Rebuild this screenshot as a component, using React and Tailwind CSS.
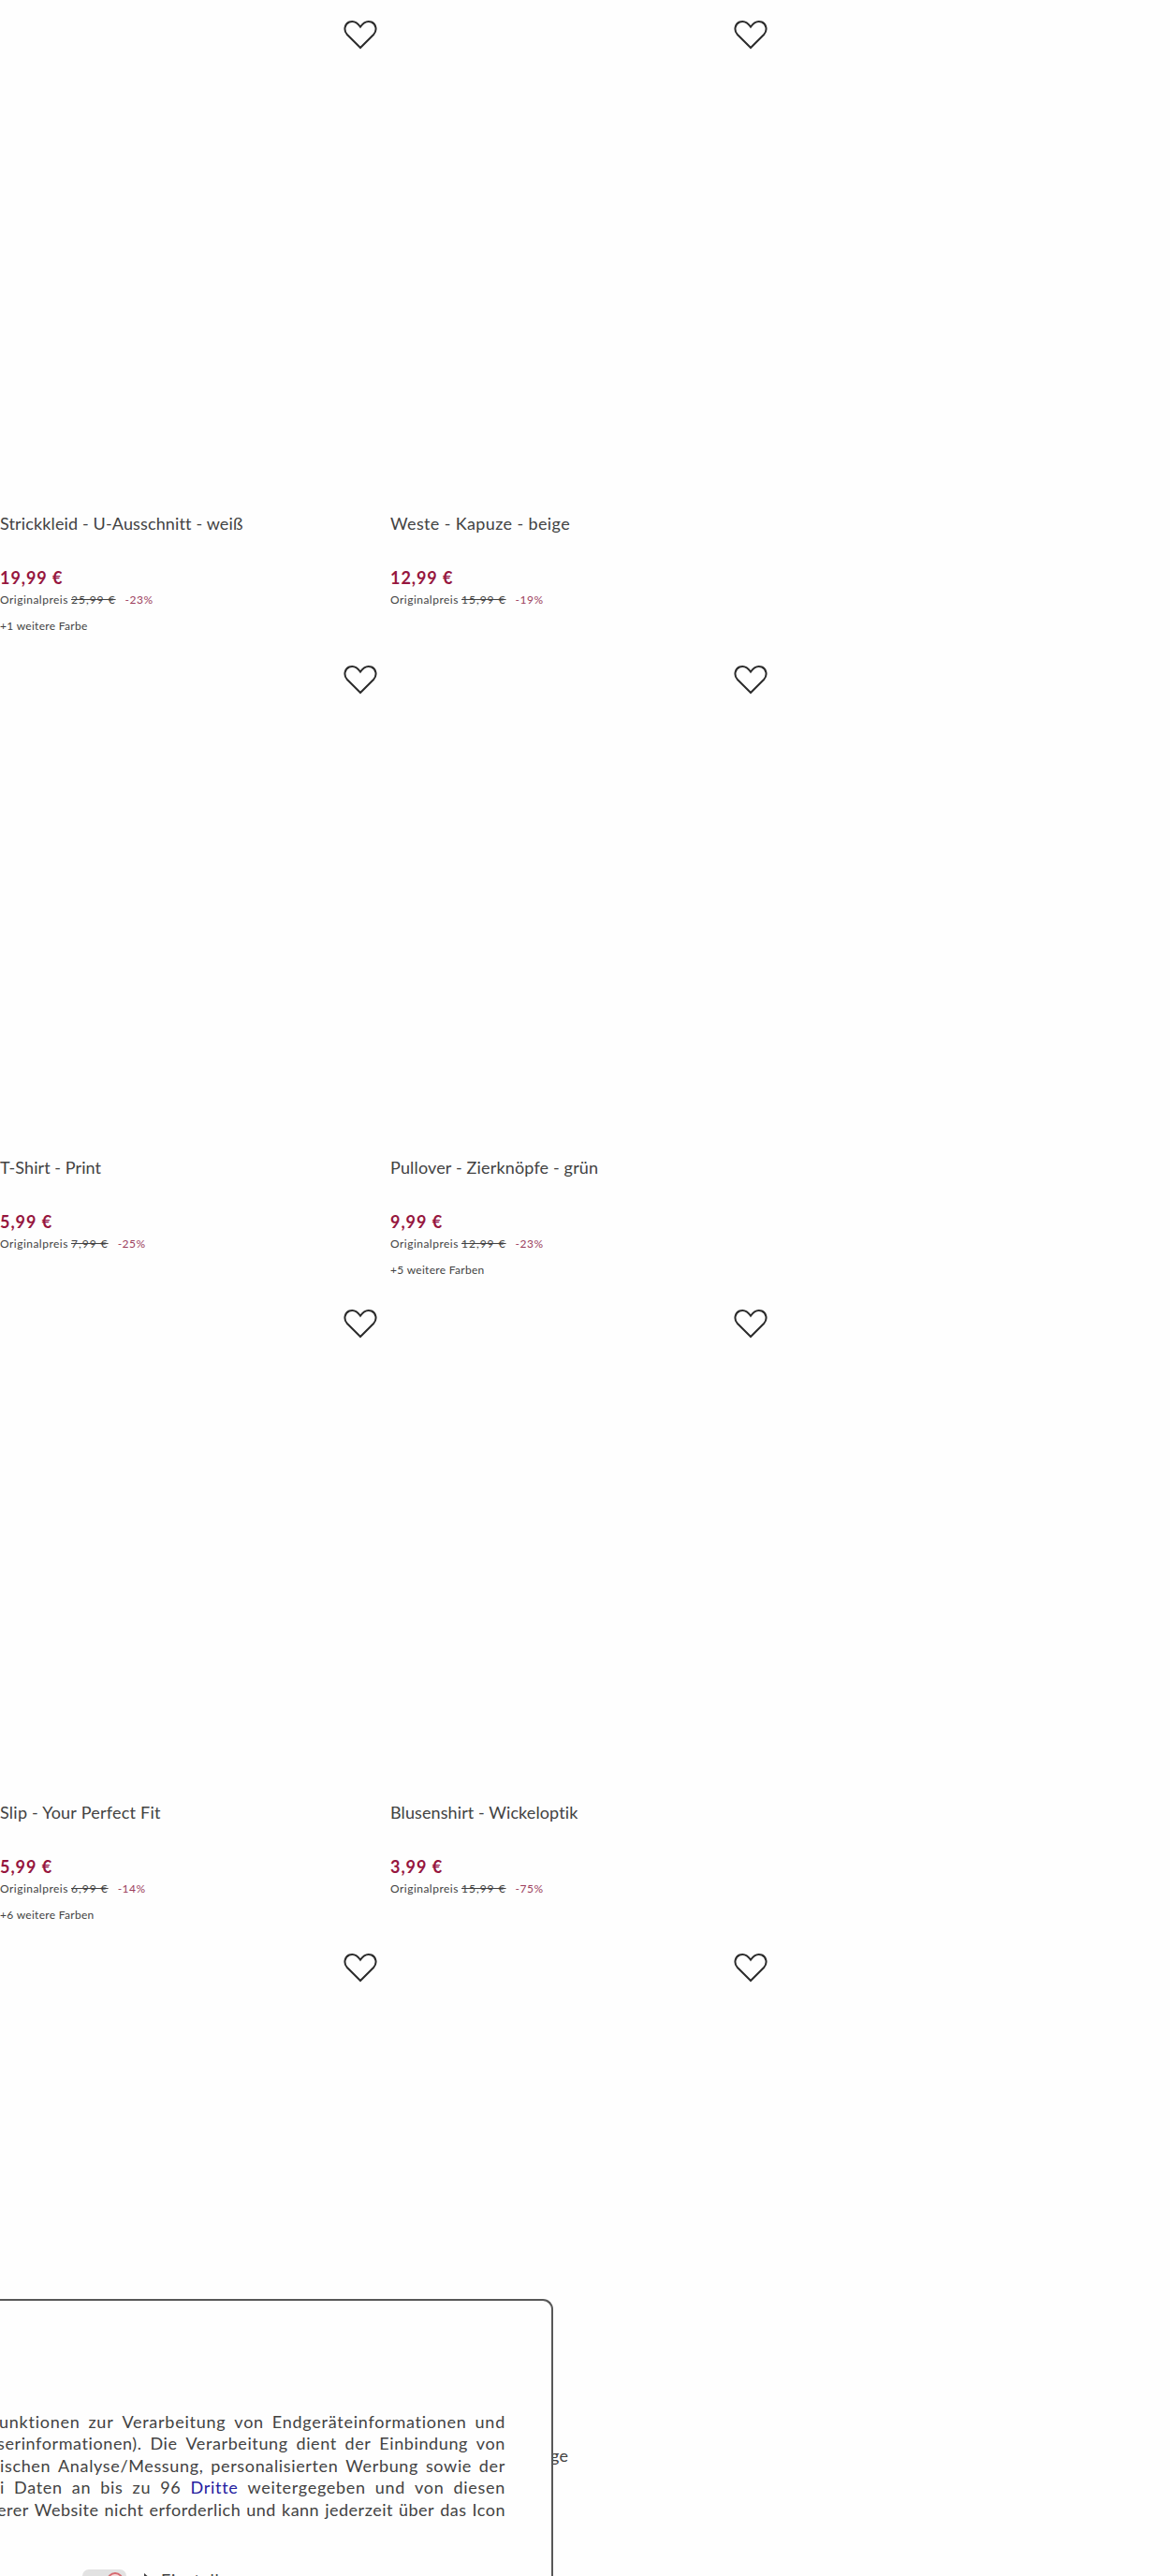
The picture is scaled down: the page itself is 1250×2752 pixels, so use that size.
const products = [
  { name: 'Strickkleid - U-Ausschnitt - weiß', price: '19,99 €', old: '25,99 €', off: '-23%', colors: '+1 weitere Farbe', tracking: 'tracking-[0.14px]' },
  { name: 'Weste - Kapuze - beige', price: '12,99 €', old: '15,99 €', off: '-19%', tracking: 'tracking-[0.38px]' },
  { name: 'T-Shirt - Print', price: '5,99 €', old: '7,99 €', off: '-25%', tracking: 'tracking-[0.07px]' },
  { name: 'Pullover - Zierknöpfe - grün', price: '9,99 €', old: '12,99 €', off: '-23%', colors: '+5 weitere Farben', tracking: 'tracking-[0.16px]' },
  { name: 'Slip - Your Perfect Fit', price: '5,99 €', old: '6,99 €', off: '-14%', colors: '+6 weitere Farben', tracking: 'tracking-[0.24px]' },
  { name: 'Blusenshirt - Wickeloptik', price: '3,99 €', old: '15,99 €', off: '-75%', tracking: 'tracking-[0.1px]' },
  {},
  {},
];

const consentLines = [
  { text: 'unktionen zur Verarbeitung von Endgeräteinformationen und', style: '-ml-px tracking-[0.75px]' },
  { text: 'serinformationen). Die Verarbeitung dient der Einbindung von', style: '-ml-[3px] tracking-[0.6px]' },
  { text: 'ischen Analyse/Messung, personalisierten Werbung sowie der', style: 'ml-0 tracking-[0.65px]' },
  { text: 'i Daten an bis zu 96 Dritte weitergegeben und von diesen', style: 'ml-0 tracking-[0.7px]' },
  { text: 'erer Website nicht erforderlich und kann jederzeit über das Icon', style: '-ml-[3px] tracking-[0.5px]' },
];

const HeartIcon = () => (
  <svg width="36" height="32" viewBox="0 0 36 32" fill="none" stroke="#2b2b2b" strokeWidth="2">
    <path d="M18 30 L3.7 15.7 C-.2 11.3 1.2 4.5 6.2 2.5 C10.5.9 14.5 2.7 18 7.7 C21.5 2.7 25.5.9 29.8 2.5 C34.8 4.5 36.2 11.3 32.3 15.7 Z" />
  </svg>
);

const ProductCard = ({ product }) => (
  <article className="h-[688.3px] w-[417px]">
    <div className="flex h-[546px] justify-end pt-[21.4px] pr-[14px]">
      <HeartIcon />
    </div>
    {product.name && (
      <>
        <h3 className={`h-[59px] text-[18px] leading-[26px] whitespace-nowrap ${product.tracking}`}>{product.name}</h3>
        <p className="h-6 text-[18px] leading-6 font-bold tracking-[0.95px] text-[#96163e]">{product.price}</p>
        <p className="flex h-[28px] text-[12px] leading-[24px] whitespace-nowrap">
          <span className="w-[76px] tracking-[0.48px]">Originalpreis</span>
          <s className="tracking-[1px]">{product.old}</s>
          <span className="ml-[10px] tracking-[0.5px] text-[#9c3d5c]">{product.off}</span>
        </p>
        <p className="text-[12px] leading-6 tracking-[0.3px]">{product.colors}</p>
      </>
    )}
  </article>
);

const ConsentDialog = () => (
  <section className="absolute top-[2456px] left-0 h-[296px] w-[591px] overflow-hidden rounded-tr-[11px] border-t-2 border-r-2 border-[#585858] bg-[#fefefe] pt-[118px]">
    <div className="w-[540px] text-[18px] leading-[23.4px] whitespace-nowrap">
      {consentLines.map((line) => (
        <div key={line.text} className={`flex justify-between ${line.style}`}>
          {line.text.split(' ').map((word, i) => (
            <span key={i} className={word === 'Dritte' ? 'text-[#2320a0]' : ''}>{word}</span>
          ))}
        </div>
      ))}
    </div>
    <div className="mt-[52px] ml-[88px] flex items-start">
      <div className="flex h-6 w-[47px] shrink-0 justify-end rounded-[7px] bg-[#e2e2e2] pt-[3px] pr-[3px]">
        <div className="h-[18px] w-[18px] rounded-full border-2 border-[#d66a70] bg-[#f6dcdc]" />
      </div>
      <svg className="mt-1 ml-[18px]" width="8" height="12" viewBox="0 0 8 12" fill="#3c3c3c">
        <path d="M1 0 L8 6 L1 12 Z" />
      </svg>
      <span className="-mt-px ml-[11px] text-[18px] leading-6 tracking-[0.7px]">Einstellungen</span>
    </div>
  </section>
);

export default function App() {
  return (
    <main className="relative h-[2752px] w-[1250px] overflow-hidden bg-[#fefefe] font-[Lato,sans-serif] text-[#424242]">
      <div className="grid grid-cols-[417px_417px]">
        {products.map((product, i) => (
          <ProductCard key={i} product={product} />
        ))}
      </div>
      <span className="absolute top-[2610px] left-[588px] text-[18px] leading-[26px] tracking-[0.3px]">ge</span>
      <ConsentDialog />
    </main>
  );
}
